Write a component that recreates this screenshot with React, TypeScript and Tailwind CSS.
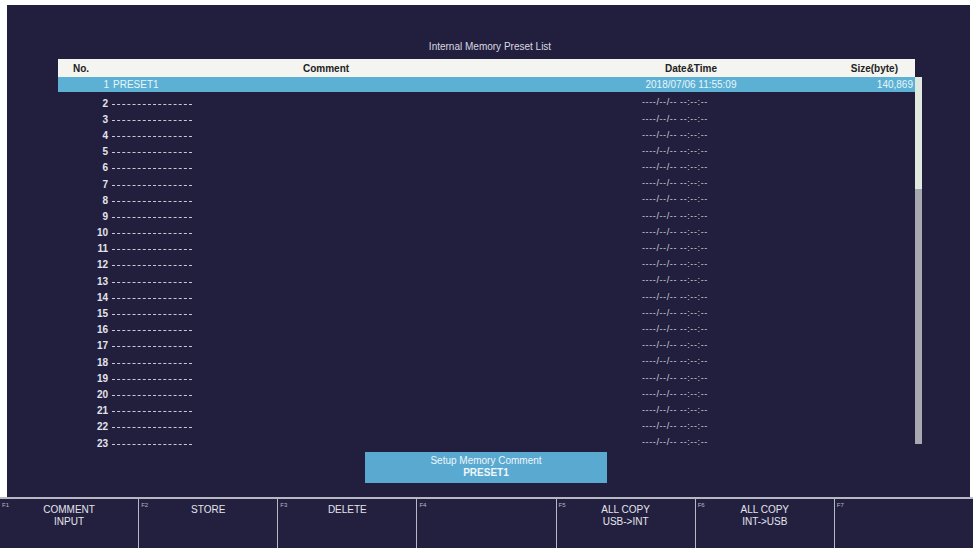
const rows = Array.from({ length: 22 }, (_, i) => i + 2)
const keys = [
  ['F1', 'COMMENT', 'INPUT'],
  ['F2', 'STORE', ''],
  ['F3', 'DELETE', ''],
  ['F4', '', ''],
  ['F5', 'ALL COPY', 'USB->INT'],
  ['F6', 'ALL COPY', 'INT->USB'],
  ['F7', '', ''],
]

export default function App() {
  return (
    <div className="w-[973px] h-[548px] bg-white pl-[7px] pt-[5px] pr-[3px] overflow-hidden" style={{ fontFamily: '"Liberation Sans", Arial, sans-serif' }}>
      <div className="h-[543px] bg-[#221f3e] flex flex-col">
        <div className="h-[492px] flex flex-col pl-[51px] pr-[48px]">
          <div className="pt-[34px] text-center text-[10px] text-[#d8d8e0] mb-[5px]">Internal Memory Preset List</div>
          <div className="flex">
            <div className="flex-1">
              <div className="h-[18px] bg-[#f4f4f0] flex items-center text-[10px] font-bold text-[#222] px-[15px]">
                <span className="w-[230px]">No.</span>
                <span className="w-[100px]">Comment</span>
                <span className="w-[238px]"></span>
                <span className="w-[100px] text-center">Date&amp;Time</span>
                <span className="flex-1 text-right pr-[2px]">Size(byte)</span>
              </div>
              <div className="h-[15px] bg-[#5cb0d4] flex items-center text-[10px] text-[#e8f6fb]">
                <span className="w-[51px] text-right">1</span>
                <span className="ml-[4px] w-[513px]">PRESET1</span>
                <span className="w-[130px] text-center">2018/07/06 11:55:09</span>
                <span className="flex-1 text-right pr-[2px]">140,869</span>
              </div>
              <div className="pt-[3px]">
                {rows.map((n) => (
                  <div key={n} className="h-[16.2px] flex items-center text-[10px] text-[#e4e4ec]">
                    <span className="w-[50px] text-right font-bold">{n}</span>
                    <span className="ml-[4px] w-[80px] border-b border-dashed border-[#c8c8d4] h-0 mt-[2px]"></span>
                    <span className="w-[450px]"></span>
                    <span className="text-[9px] tracking-[0.6px] text-[#d0d0dc]">----/--/--  --:--:--</span>
                  </div>
                ))}
              </div>
            </div>
            <div className="w-[7px] mt-[18px] h-[367px] flex flex-col">
              <div className="h-[112px] bg-[#dfe9df]"></div>
              <div className="flex-1 bg-[#a8a8b0]"></div>
            </div>
          </div>
          <div className="flex justify-center mt-[1px] pr-[8px]">
            <div className="w-[242px] h-[31px] bg-[#5aa9d0] text-[10px] text-[#eef7fb] text-center leading-[12px] pt-[3px]">
              <div>Setup Memory Comment</div>
              <div className="font-bold">PRESET1</div>
            </div>
          </div>
        </div>
        <div className="flex-1 flex border-t-2 border-[#b8b8c4] -ml-[7px] -mr-[3px]">
          {keys.map(([f, a, b], i) => (
            <div key={f} className={`relative flex-1 bg-[#23203f] border-r border-[#b8b8c4] text-center text-[10px] text-[#e4e4ec] leading-[12px] pt-[5px]${i === 6 ? ' border-r-0' : ''}`}>
              <span className="absolute left-[2px] top-0 text-[6px] text-[#b8b8c4]">{f}</span>
              <div>{a}</div>
              <div>{b}</div>
            </div>
          ))}
        </div>
      </div>
    </div>
  )
}
